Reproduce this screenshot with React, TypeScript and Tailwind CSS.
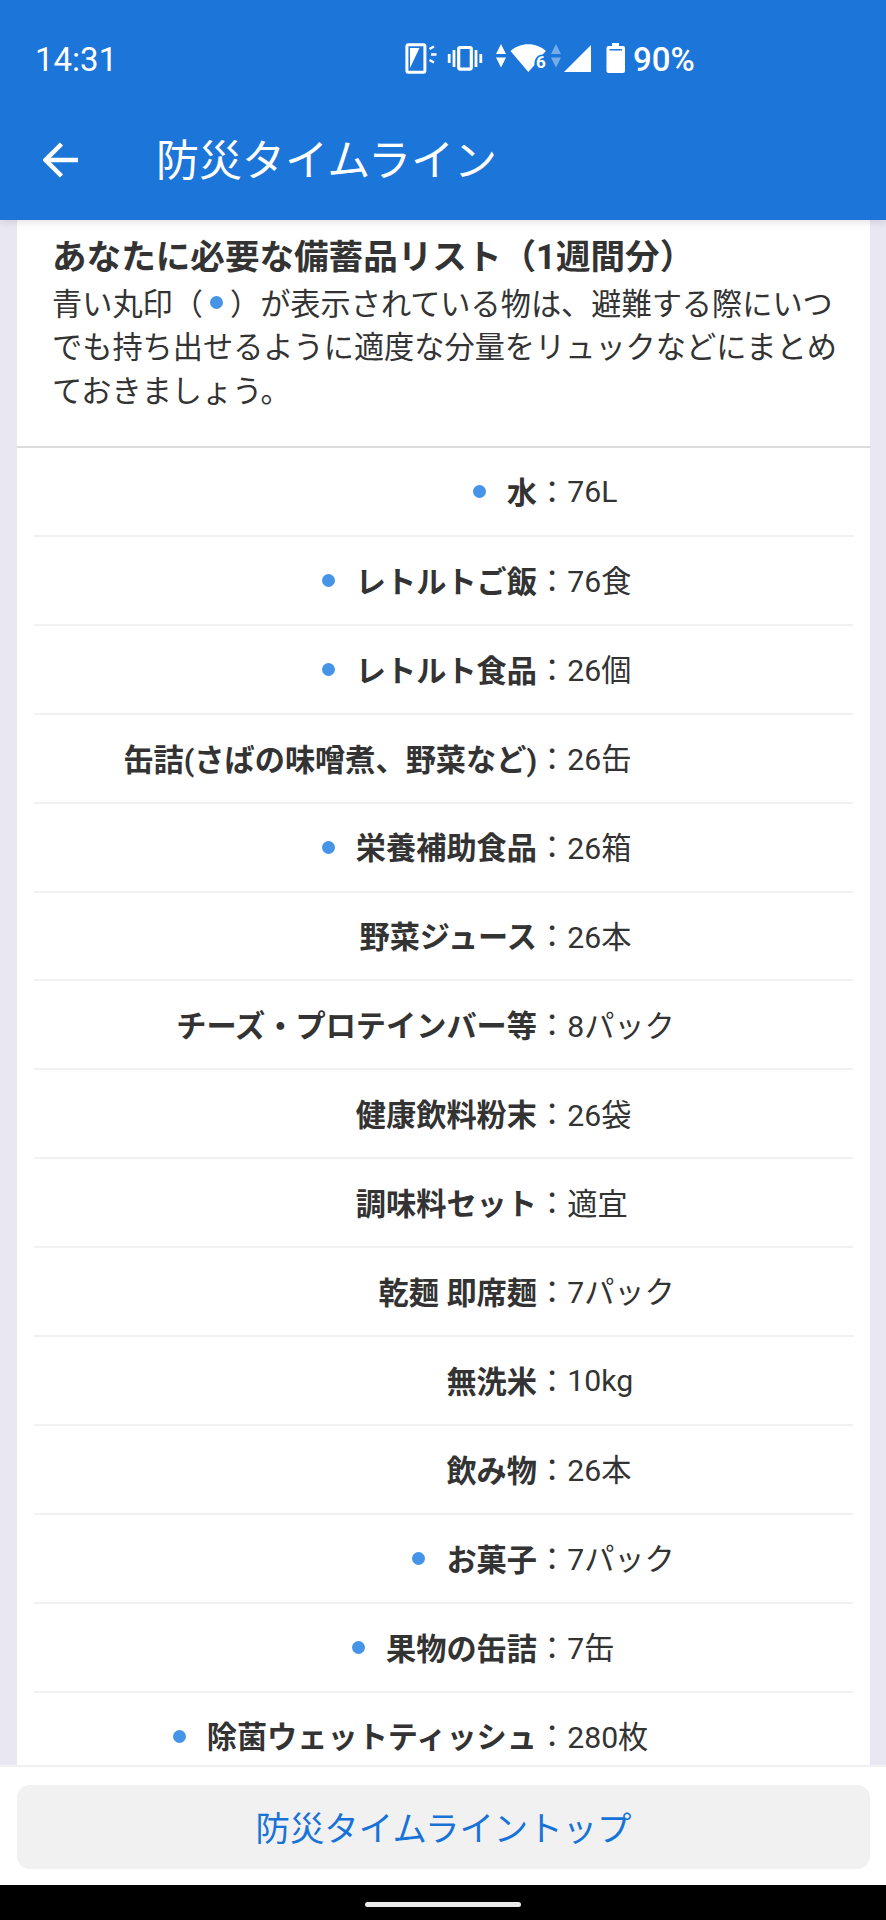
import React from 'react';

interface SupplyItem {
    name: string;
    amount: string;
    portable?: boolean;
}

const items: SupplyItem[] = [
    { name: '水', amount: '76L', portable: true },
    { name: 'レトルトご飯', amount: '76食', portable: true },
    { name: 'レトルト食品', amount: '26個', portable: true },
    { name: '缶詰(さばの味噌煮、野菜など)', amount: '26缶' },
    { name: '栄養補助食品', amount: '26箱', portable: true },
    { name: '野菜ジュース', amount: '26本' },
    { name: 'チーズ・プロテインバー等', amount: '8パック' },
    { name: '健康飲料粉末', amount: '26袋' },
    { name: '調味料セット', amount: '適宜' },
    { name: '乾麺 即席麺', amount: '7パック' },
    { name: '無洗米', amount: '10kg' },
    { name: '飲み物', amount: '26本' },
    { name: 'お菓子', amount: '7パック', portable: true },
    { name: '果物の缶詰', amount: '7缶', portable: true },
    { name: '除菌ウェットティッシュ', amount: '280枚', portable: true },
];

const StatusIcons = () => (
    <svg width="232" height="40" viewBox="0 0 232 40" fill="none" className="shrink-0">
        {/* Phone with flash */}
        <rect x="1.9" y="4.7" width="18" height="27.6" rx="1.5" stroke="#fff" strokeWidth="3" />
        <path d="M5 8H14.5L5 28Z" fill="#fff" />
        <path d="M24.5 9L29 6.500M26 14.5H31.5M24.5 20L29 22.500" stroke="#fff" strokeWidth="2.4" />
        {/* Vibrate */}
        <rect x="53.7" y="7.5" width="12.6" height="21.6" rx="1.5" stroke="#fff" strokeWidth="3.2" />
        <path d="M44.2 14V23M49 10V27M71 10V27M75.8 14V23" stroke="#fff" strokeWidth="2.8" />
        {/* Traffic arrows */}
        <path d="M91 14L96 4L101 14ZM91 17.5H101L96 27.5Z" fill="#fff" />
        {/* Wifi 6 */}
        <path d="M105.5 11C115 2 131.500 2 141 11L137.500 14.500C132.500 14.500 129 19 129.500 25L123.300 32Z" fill="#fff" />
        <text x="131" y="28" fill="#fff" fontSize="17" fontWeight="700" fontFamily="Roboto">6</text>
        <path d="M146 14L151 4L156 14ZM146 17.500H156L151 27.500Z" fill="#fff" fillOpacity="0.4" />
        {/* Signal */}
        <path d="M159 32L186 5V32Z" fill="#fff" />
        {/* Battery */}
        <path d="M207 3H214V6H218Q220 6 220 8V31Q220 33 218 33H203.500Q201.500 33 201.500 31V8Q201.500 6 203.500 6H207Z" fill="#fff" />
        <path d="M204.500 9.800H217" stroke="#1c75d9" strokeWidth="1.5" />
    </svg>
);

const BlueDot = ({ className }: { className: string }) => (
    <span className={`inline-block h-[13px] w-[13px] rounded-full bg-[#4594e8] ${className}`} />
);

const SupplyRow = ({ item }: { item: SupplyItem }) => (
    <li className="flex h-[88.92px] shrink-0 items-center border-b-2 border-[#f1f1f2] text-[30.2px]">
        <div className="flex w-[503px] shrink-0 items-center justify-end whitespace-nowrap font-bold">
            {item.portable && <BlueDot className="mr-[21px]" />}
            <span className="pt-1">{item.name}</span>
        </div>
        <span className="pt-0.5">：</span>
        <span className={`whitespace-nowrap ${/^\w+$/.test(item.amount) ? '' : 'pt-[3px]'}`}>{item.amount}</span>
    </li>
);

const App: React.FC = () => {
    return (
        <div lang="ja" className="flex h-[1920px] w-[886px] flex-col overflow-hidden bg-white font-[Roboto,'Noto_Sans_CJK_JP',sans-serif] text-[#333333]">
            {/* Header */}
            <header className="z-10 flex h-[219.5px] shrink-0 flex-col bg-[#1c75d9] text-white shadow-[0_2px_8px_rgba(0,0,0,0.12)]">
                <div className="flex h-[100px] items-center pt-[19px]">
                    <span className="w-[405px] shrink-0 pl-[35px] text-[33px]">14:31</span>
                    <StatusIcons />
                    <span className="ml-[-4px] text-[33px] font-medium">90%</span>
                </div>
                <div className="flex h-[119px] items-center">
                    <svg width="36" height="36" viewBox="0 0 36 36" fill="none" className="ml-[43px]">
                        <path d="M35 18H4M18.500 2L2.500 18L18.500 34" stroke="#fff" strokeWidth="4.5" />
                    </svg>
                    <h1 className="ml-[77px] pt-[3px] text-[43px] leading-none">防災タイムライン</h1>
                </div>
            </header>

            {/* Supply list */}
            <main className="flex min-h-0 flex-1 flex-col overflow-hidden bg-[#e9e7f2] pl-[17px] pr-4">
                <div className="flex shrink-0 flex-col bg-white">
                    <section className="h-[228.5px] border-b-2 border-[#dcdcdd] pl-[35px] pr-4 pt-[15px]">
                        <h2 className="text-[34.6px] font-bold leading-[44px]">あなたに必要な備蓄品リスト（1週間分）</h2>
                        <p className="w-[790px] pt-1 text-[30.2px] leading-[43.8px]">
                            青い丸印（<BlueDot className="mx-[7px] align-[6px]" />）が表示されている物は、避難する際にいつでも持ち出せるように適度な分量をリュックなどにまとめておきましょう。
                        </p>
                    </section>
                    <ul className="flex flex-col px-[17px]">
                        {items.map(item => (
                            <SupplyRow key={item.name} item={item} />
                        ))}
                    </ul>
                </div>
            </main>

            {/* Bottom button */}
            <footer className="z-10 h-[120px] shrink-0 border-t-2 border-[#f1f1f2] bg-white pl-[17px] pr-4 pt-[18px]">
                <button className="flex h-[84px] w-full items-center justify-center rounded-[13px] bg-[#f1f1f1] pt-[5px] text-[34.4px] text-[#1873d8]">
                    防災タイムライントップ
                </button>
            </footer>
            <div className="flex h-[35px] shrink-0 items-center justify-center bg-black">
                <div className="mt-[3px] h-[5px] w-[156px] rounded-full bg-[#ebebeb]" />
            </div>
        </div>
    );
};

export default App;
